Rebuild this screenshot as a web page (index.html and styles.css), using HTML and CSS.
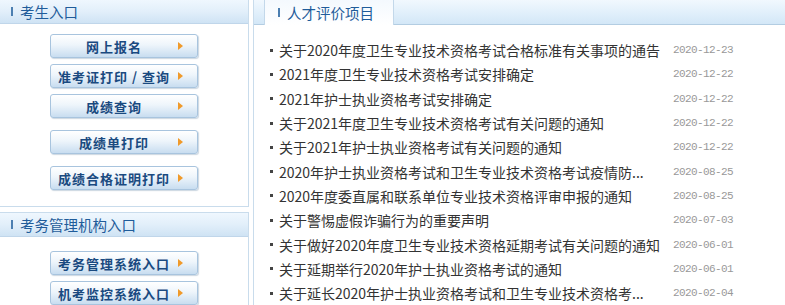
FILE: index.html
```html
<!DOCTYPE html>
<html>
	<head>
		<meta charset="utf-8">
		<title>人才评价项目</title>
		<link rel="stylesheet" href="styles.css">
	</head>
	<body>
		<div class=page>
			<div class=side>
				<div class="box first">
					<div class=boxHead><span class=mark></span>考生入口</div>
					<div class=btns>
						<a class=btn href="#"><span>网上报名</span></a>
						<a class=btn href="#"><span>准考证打印 / 查询</span></a>
						<a class=btn href="#"><span>成绩查询</span></a>
						<a class="btn wide" href="#"><span>成绩单打印</span></a>
						<a class="btn wide" href="#"><span>成绩合格证明打印</span></a>
					</div>
				</div>
				<div class="box second">
					<div class=boxHead><span class=mark></span>考务管理机构入口</div>
					<div class=btns>
						<a class=btn href="#"><span>考务管理系统入口</span></a>
						<a class=btn href="#"><span>机考监控系统入口</span></a>
					</div>
				</div>
			</div>
			<div class=main>
				<div class=tabBar>
					<div class=tab><span class=mark></span>人才评价项目</div>
				</div>
				<ul class=news>
					<li><a href="#">关于2020年度卫生专业技术资格考试合格标准有关事项的通告</a><span class=date>2020-12-23</span></li>
					<li><a href="#">2021年度卫生专业技术资格考试安排确定</a><span class=date>2020-12-22</span></li>
					<li><a href="#">2021年护士执业资格考试安排确定</a><span class=date>2020-12-22</span></li>
					<li><a href="#">关于2021年度卫生专业技术资格考试有关问题的通知</a><span class=date>2020-12-22</span></li>
					<li><a href="#">关于2021年护士执业资格考试有关问题的通知</a><span class=date>2020-12-22</span></li>
					<li><a href="#">2020年护士执业资格考试和卫生专业技术资格考试疫情防...</a><span class=date>2020-08-25</span></li>
					<li><a href="#">2020年度委直属和联系单位专业技术资格评审申报的通知</a><span class=date>2020-08-25</span></li>
					<li><a href="#">关于警惕虚假诈骗行为的重要声明</a><span class=date>2020-07-03</span></li>
					<li><a href="#">关于做好2020年度卫生专业技术资格延期考试有关问题的通知</a><span class=date>2020-06-01</span></li>
					<li><a href="#">关于延期举行2020年护士执业资格考试的通知</a><span class=date>2020-06-01</span></li>
					<li><a href="#">关于延长2020年护士执业资格考试和卫生专业技术资格考...</a><span class=date>2020-02-04</span></li>
				</ul>
			</div>
		</div>
	</body>
</html>
```

FILE: styles.css
```css
body {
	margin: 0;
	font-family: "Noto Sans CJK SC", "Noto Sans", sans-serif;
	font-size: 14px;
	color: #333;
	background-color: #fff;
	overflow: hidden;
}

a {
	text-decoration: none;
	color: inherit;
}

.page {
	display: flex;
	gap: 4px;
	height: 305px;
	overflow: hidden;
}

.side {
	width: 249px;
	flex: none;
}

.box {
	border: 1px solid #c9dcec;
	border-left: none;
	box-sizing: border-box;
}

.box.first {
	border-top: none;
	height: 207px;
}

.box.second {
	margin-top: 5px;
}

.boxHead {
	height: 24px;
	line-height: 23px;
	padding-left: 11px;
	box-sizing: border-box;
	background: linear-gradient(#eff7fe, #e2effa 50%, #cfe3f4);
	border-bottom: 1px solid #c0d6ea;
	color: #1f5c9a;
	font-size: 14.5px;
	display: flex;
	align-items: center;
}

.mark {
	display: inline-block;
	width: 2px;
	height: 9px;
	background-color: #4c7fb1;
	margin-right: 7px;
}

.btns {
	display: flex;
	flex-direction: column;
	align-items: center;
	gap: 6px;
	padding: 10px 0 15px;
}

.second .btns {
	padding-top: 14px;
}

.btn {
	position: relative;
	width: 148px;
	height: 24px;
	box-sizing: border-box;
	border: 1px solid #a8c4de;
	border-radius: 3px;
	background: linear-gradient(#ffffff, #eef5fb 45%, #c8ddf0);
	box-shadow: 1px 1px 1px rgba(110, 140, 170, 0.35);
	display: flex;
	align-items: center;
	justify-content: center;
	padding-right: 20px;
	color: #1a4a80;
	font-weight: 700;
	font-size: 13px;
	letter-spacing: 1px;
}

.btn.wide {
	margin-top: 6px;
}

.btn::after {
	content: "";
	position: absolute;
	right: 14px;
	top: 7px;
	border-left: 5px solid #f09a2a;
	border-top: 4px solid transparent;
	border-bottom: 4px solid transparent;
}

.main {
	flex: 1;
	border-left: 1px solid #c9dcec;
}

.tabBar {
	height: 25px;
	box-sizing: border-box;
	background: linear-gradient(#f1f8fe, #e2f0fb 50%, #d3e7f7);
	border-bottom: 1px solid #b3cde2;
	padding-left: 10px;
	display: flex;
	align-items: flex-end;
}

.tab {
	width: 130px;
	height: 25px;
	box-sizing: border-box;
	margin-bottom: -1px;
	background: linear-gradient(#f4f9fe, #ffffff);
	border: 1px solid #c3d8ea;
	border-top: none;
	border-bottom: none;
	padding-left: 13px;
	display: flex;
	align-items: center;
	color: #1f5c9a;
	font-size: 14.5px;
}

.news {
	list-style: none;
	margin: 0;
	padding: 13px 0 0 16px;
}

.news li {
	height: 24.3px;
	display: flex;
	align-items: center;
}

.news li::before {
	content: "";
	width: 3px;
	height: 3px;
	background-color: #444;
	margin-right: 6px;
	flex: none;
}

.news li a {
	width: 394px;
	white-space: nowrap;
	overflow: hidden;
	color: #333;
	font-size: 14px;
}

.date {
	font-family: "Liberation Mono", monospace;
	font-size: 11px;
	letter-spacing: -0.6px;
	color: #999;
}
```
